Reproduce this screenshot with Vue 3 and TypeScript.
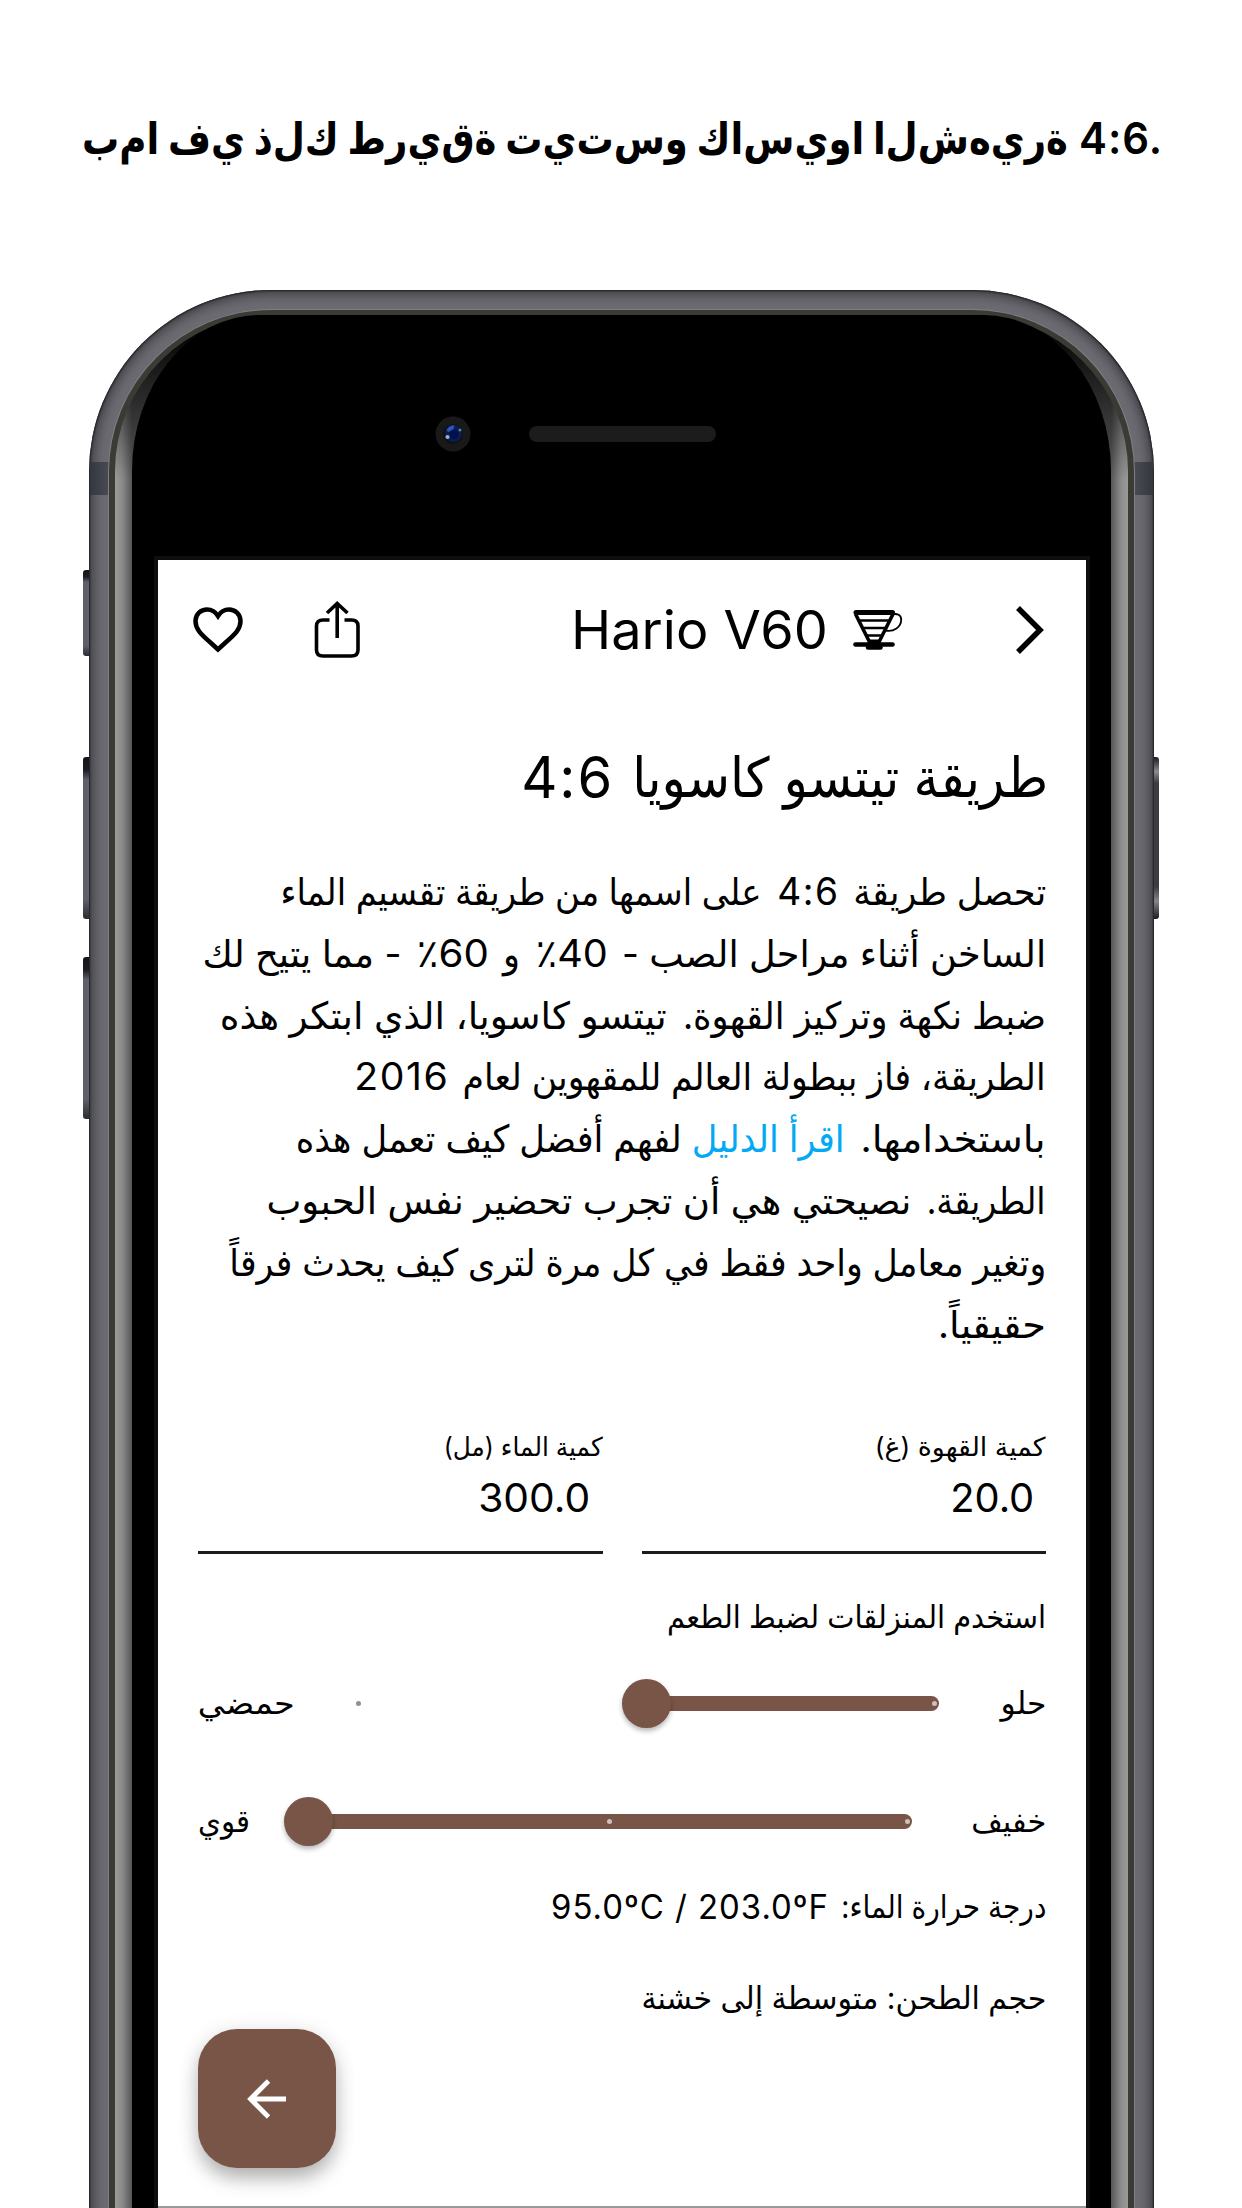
<script setup lang="ts">
interface Segment {
  text: string
  width: number
  kind?: 'num' | 'link' | 'tail'
}

interface SliderRow {
  start: string
  startWidth: number
  end: string
  endWidth: number
  fill: number
  dots: number[]
  offDots: number[]
  cls: string
}

const headline: string = 'بما في ذلك طريقة تيتسو كاسيوا الشهيرة'
  .split(' ')
  .map((word) => word.split('').join('\u200c'))
  .join(' ')

const title: Segment[] = [
  { text: 'طريقة تيتسو كاسويا', width: 416 },
  { text: '4:6', width: 93, kind: 'num' },
]

// The Arabic letter mark keeps the percent sign on the left of its number.
const copy: Segment[][] = [
  [
    { text: 'تحصل طريقة', width: 193 },
    { text: '4:6', width: 62, kind: 'num' },
    { text: 'على اسمها من طريقة تقسيم الماء', width: 481 },
  ],
  [
    { text: 'الساخن أثناء مراحل الصب -', width: 424 },
    { text: '\u061c40٪', width: 72, kind: 'num' },
    { text: 'و', width: 17 },
    { text: '\u061c60٪', width: 72, kind: 'num' },
    { text: '- مما يتيح لك', width: 199 },
  ],
  [
    { text: 'ضبط نكهة وتركيز القهوة.', width: 363 },
    { text: 'تيتسو كاسويا، الذي ابتكر هذه', width: 447 },
  ],
  [
    { text: 'الطريقة، فاز ببطولة العالم للمقهوين لعام', width: 583 },
    { text: '2016', width: 95, kind: 'num' },
  ],
  [
    { text: 'باستخدامها.', width: 185 },
    { text: 'اقرأ الدليل', width: 153, kind: 'link' },
    { text: 'لفهم أفضل كيف تعمل هذه', width: 386, kind: 'tail' },
  ],
  [
    { text: 'الطريقة.', width: 119 },
    { text: 'نصيحتي هي أن تجرب تحضير نفس الحبوب', width: 645 },
  ],
  [{ text: 'وتغير معامل واحد فقط في كل مرة لترى كيف يحدث فرقاً', width: 817 }],
  [{ text: 'حقيقياً.', width: 108 }],
]

const sliders: SliderRow[] = [
  { start: 'حلو', startWidth: 46, end: 'حمضي', endWidth: 97, fill: 50, dots: [0], offDots: [100], cls: 'taste' },
  { start: 'خفيف', startWidth: 75, end: 'قوي', endWidth: 52, fill: 100, dots: [0, 49.7], offDots: [], cls: 'strength' },
]

const fields = [
  { label: 'كمية القهوة (غ)', labelWidth: 171, value: '20.0', valueWidth: 84 },
  { label: 'كمية الماء (مل)', labelWidth: 159, value: '300.0', valueWidth: 112 },
]

// Condenses or widens a single line of text to the given width.
const vFit = {
  mounted(el: HTMLElement, binding: { value: number }) {
    const natural = el.getBoundingClientRect().width
    const rtl = getComputedStyle(el).direction === 'rtl'
    el.style.transformOrigin = rtl ? 'right center' : 'left center'
    el.style.transform = `scaleX(${binding.value / natural})`
    el.style[rtl ? 'marginLeft' : 'marginRight'] = `${binding.value - natural}px`
  },
}
</script>

<template>
  <main class="page">
    <h1 class="headline">
      <bdo dir="ltr" class="fit" v-fit="986">{{ headline }}</bdo>
      <span class="fit ratio" v-fit="84">4:6.</span>
    </h1>
    <div class="device">
      <i class="key mute"></i><i class="key up"></i><i class="key down"></i><i class="key power"></i>
      <div class="shell">
        <i class="antenna left"></i><i class="antenna right"></i>
        <div class="rim">
          <div class="bevel">
            <div class="face">
              <div class="sensors">
                <svg class="camera" width="36" height="36" viewBox="0 0 36 36">
                  <circle cx="18" cy="18" r="17.5" fill="#191919" />
                  <circle cx="18" cy="18" r="10" fill="#111114" />
                  <circle cx="18.500" cy="17.500" r="8.500" fill="#0b1c52" />
                  <path d="M11.500 14.500a8 8 0 0 1 8-5l-1 3.500-5 3z" fill="#2f55b8" />
                  <circle cx="19" cy="18.500" r="4.500" fill="#03104a" />
                  <circle cx="12.500" cy="21" r="2.100" fill="#8fb4d8" />
                  <circle cx="25" cy="14" r="1.500" fill="#4b88a8" />
                </svg>
                <span class="speaker"></span>
              </div>
              <section class="screen" dir="rtl">
                <header class="bar">
                  <svg class="chev" width="32" height="52" viewBox="0 0 32 52" fill="none" stroke="#000" stroke-width="5.500">
                    <path d="M4 4 26 26 4 48" />
                  </svg>
                  <div class="brand">
                    <svg width="50" height="42" viewBox="0 0 50 42" fill="none" stroke="#000">
                      <path d="M3 3.500H39.500" stroke-width="5" stroke-linecap="round" />
                      <path d="M2.500 5 17 34M40 5 25.500 34" stroke-width="3.600" />
                      <path d="M7 11.500H36M10.500 19H32.500M14 26.500H29" stroke-width="2.300" />
                      <path d="M39 5.500C44 4 48.500 6 48.200 11 48 18 41 23 32.500 21.500" stroke-width="1.800" />
                      <path d="M2.500 35.500H39.500" stroke-width="4.600" stroke-linecap="round" />
                      <path d="M15 38.500H27.500" stroke-width="4.500" stroke-linecap="round" />
                      <path d="M17 31H25.500L24 36H18.500Z" fill="#000" />
                    </svg>
                    <span dir="ltr" class="fit" v-fit="257">Hario V60</span>
                  </div>
                  <svg class="share" width="46" height="58" viewBox="0 0 46 58" fill="none" stroke="#000" stroke-width="3.600">
                    <path d="M15.500 19H9Q2.500 19 2.500 25V49Q2.500 55 9 55H37.500Q44 55 44 49V25Q44 19 37.500 19H30.500" />
                    <path d="M23.200 37V3M13 12 23.200 2.500 33.500 12" />
                  </svg>
                  <svg class="heart" width="50" height="46" viewBox="0 0 50 46" fill="none" stroke="#000" stroke-width="4.500">
                    <path d="M25 42.500 18 36C7.500 27 2.500 22 2.500 14 2.500 7 8 2.500 14 2.500 18.500 2.500 22.500 5 25 9 27.500 5 31.500 2.500 36 2.500 42 2.500 47.500 7 47.500 14 47.500 22 42.500 27 32 36Z" />
                  </svg>
                </header>

                <h2 class="title">
                  <span v-for="s in title" :key="s.text" class="fit" :class="s.kind" v-fit="s.width">{{ s.text }}</span>
                </h2>

                <div class="copy">
                  <p v-for="(line, i) in copy" :key="i">
                    <span v-for="s in line" :key="s.text" class="fit" :class="s.kind" v-fit="s.width">{{ s.text }}</span>
                  </p>
                </div>

                <div class="fields">
                  <div v-for="f in fields" :key="f.label" class="field">
                    <div class="label"><span class="fit" v-fit="f.labelWidth">{{ f.label }}</span></div>
                    <div class="value"><span class="fit" v-fit="f.valueWidth">{{ f.value }}</span></div>
                  </div>
                </div>

                <p class="hint"><span class="fit" v-fit="379">استخدم المنزلقات لضبط الطعم</span></p>

                <div v-for="s in sliders" :key="s.cls" class="slider" :class="s.cls">
                  <span class="fit" v-fit="s.startWidth">{{ s.start }}</span>
                  <div class="track">
                    <span class="fill" :style="{ width: s.fill + '%' }"></span>
                    <span class="stops">
                      <i v-for="d in s.dots" :key="d" class="dot" :style="{ right: d + '%' }"></i>
                      <i v-for="d in s.offDots" :key="d" class="dot off" :style="{ right: d + '%' }"></i>
                      <i class="thumb" :style="{ right: s.fill + '%' }"></i>
                    </span>
                  </div>
                  <span class="fit" v-fit="s.endWidth">{{ s.end }}</span>
                </div>

                <p class="info temp">
                  <span class="fit" v-fit="205">درجة حرارة الماء:</span>
                  <span dir="ltr" class="fit degrees" v-fit="278">95.0ºC / 203.0ºF</span>
                </p>
                <p class="info"><span class="fit" v-fit="405">حجم الطحن: متوسطة إلى خشنة</span></p>

                <button class="next" type="button">
                  <svg width="42" height="42" viewBox="0 0 42 42" fill="none" stroke="#fff" stroke-width="4.800">
                    <path d="M40 21H5M22.500 3 4.500 21 22.500 39" />
                  </svg>
                </button>
              </section>
            </div>
          </div>
        </div>
      </div>
    </div>
  </main>
</template>

<style>
body {
  background: #fff;
}
</style>

<style scoped>
* {
  box-sizing: border-box;
}
.page {
  width: 1242px;
  height: 2208px;
  overflow: hidden;
  background: #fff;
  color: #000;
  font-family: Inter, 'DejaVu Sans', sans-serif;
}
h1,
h2,
p {
  margin: 0;
  font-weight: 400;
}
svg {
  flex: none;
}
.fit {
  display: inline-block;
  flex: none;
  white-space: nowrap;
}
.headline {
  display: flex;
  gap: 11px;
  margin-top: 108px;
  margin-left: 82px;
  height: 60px;
  font-size: 44px;
  line-height: 60px;
  font-weight: 700;
}
.ratio {
  font-weight: 600;
  letter-spacing: 1px;
}
.device {
  position: relative;
  width: 1065px;
  height: 2100px;
  margin: 122px 0 0 89px;
}
.key {
  position: absolute;
  width: 9px;
  left: -6px;
  border-radius: 3px 0 0 3px;
  background: linear-gradient(#14141a, #1d1e24 8%, #5d6069 14%, #5d6069 88%, #2b2c31);
}
.mute {
  top: 280px;
  height: 86px;
}
.up {
  top: 467px;
  height: 162px;
}
.down {
  top: 667px;
  height: 162px;
}
.power {
  top: 467px;
  height: 162px;
  left: auto;
  right: -5px;
  border-radius: 0 3px 3px 0;
  background: linear-gradient(#1a1b1f, #8a8b90 9%, #3b3d43 16%, #3b3d43 80%, #85868b 89%, #1a1b1f);
}
.shell {
  position: relative;
  height: 100%;
  padding: 20px 20px 0;
  border-radius: 182px 182px 0 0;
  background: #6c6b71;
  box-shadow: inset 0 0 2px 1px #1d1e21, inset 0 0 12px 4px #3b3b41;
}
.antenna {
  position: absolute;
  top: 172px;
  width: 20px;
  height: 33px;
  background: linear-gradient(90deg, #34373d, #4a4d53);
}
.antenna.left {
  left: 1px;
}
.antenna.right {
  right: 1px;
  transform: scaleX(-1);
}
.rim {
  position: relative;
  height: 100%;
  padding: 5px 6px 0;
  border-radius: 162px 162px 0 0;
  background: #3a3b35;
  box-shadow: 0 0 0 1px #7f7e84;
}
.bevel {
  height: 100%;
  padding: 0 17px;
  border-radius: 156px 156px 0 0;
  background:
    linear-gradient(#000 10px, rgba(0, 0, 0, 0.75) 45px, transparent 165px) top / 100% 170px no-repeat,
    linear-gradient(90deg, #9a9a9a 0, #8c8c8c 7px, #565656 17px, #565656 calc(100% - 17px), #8c8c8c calc(100% - 7px), #9a9a9a 100%);
}
.face {
  height: 100%;
  padding: 0 25px 0 26px;
  background: #000;
  border-radius: 128px 128px 0 0 / 156px 156px 0 0;
}
.sensors {
  display: flex;
  align-items: center;
  gap: 58px;
  height: 245px;
  padding: 0 0 8px 277px;
}
.speaker {
  width: 187px;
  height: 16px;
  border-radius: 8px;
  background: #1c1c1c;
}
.screen {
  height: 1648px;
  padding: 0 40px;
  background: #fff;
  border-bottom: 2px solid #999;
  box-shadow: 0 0 0 4px #0e0e0e;
}
.bar {
  display: flex;
  align-items: center;
  height: 139px;
}
.brand {
  display: flex;
  flex: none;
  align-items: center;
  gap: 25px;
  margin-right: 111px;
  font-size: 53px;
  line-height: 80px;
}
.share {
  margin-right: 211px;
}
.heart {
  margin-right: 71px;
}
.title {
  display: flex;
  gap: 18px;
  margin-top: 38px;
  margin-right: -2px;
  height: 80px;
  font-size: 55px;
  line-height: 80px;
}
.title .num {
  font-size: 58px;
  letter-spacing: 2px;
}
.copy {
  margin-top: 44px;
  font-size: 37.5px;
  line-height: 61.8px;
}
.copy p {
  display: flex;
  gap: 16px;
  height: 61.8px;
}
.copy .num {
  margin-right: -2px;
  font-size: 38.5px;
  letter-spacing: 1.5px;
}
.link {
  color: #03a9f4;
}
.tail {
  margin-right: -6px;
}
.fields {
  display: flex;
  gap: 39px;
  margin-top: 74px;
}
.field {
  flex: 1;
  height: 125px;
  border-bottom: 3px solid #1c1c1c;
}
.label {
  height: 36px;
  font-size: 26px;
  line-height: 36px;
}
.value {
  height: 50px;
  margin-top: 8px;
  padding-right: 12px;
  font-size: 39px;
  line-height: 50px;
}
.hint {
  margin-top: 41px;
  height: 44px;
  font-size: 31px;
  line-height: 44px;
}
.slider {
  display: flex;
  align-items: center;
  height: 60px;
  margin-top: 34px;
  font-size: 31px;
  line-height: 44px;
}
.strength {
  margin-top: 58px;
}
.track {
  position: relative;
  flex: 1;
  height: 15px;
  margin: 0 61px 0 58px;
}
.strength .track {
  margin: 0 59px 0 53px;
}
.fill {
  display: block;
  height: 15px;
  border-radius: 0 8px 8px 0;
  background: #795548;
}
.stops {
  position: absolute;
  inset: 0 5px;
}
.dot {
  position: absolute;
  top: 5px;
  width: 5px;
  height: 5px;
  margin-right: -2.5px;
  border-radius: 50%;
  background: #d0bfb8;
}
.dot.off {
  background: #998d89;
}
.thumb {
  position: absolute;
  top: -17px;
  width: 49px;
  height: 49px;
  margin-right: -24.5px;
  border-radius: 50%;
  background: #795548;
  box-shadow: 0 3px 5px rgba(0, 0, 0, 0.28);
}
.info {
  height: 44px;
  margin-top: 47px;
  font-size: 31px;
  line-height: 44px;
}
.temp {
  display: flex;
  gap: 12px;
  margin-top: 34px;
  font-size: 32px;
}
.degrees {
  font-size: 33.5px;
  letter-spacing: 1px;
}
.next {
  display: flex;
  align-items: center;
  justify-content: center;
  width: 138px;
  height: 139px;
  margin: 9px auto 0 0;
  padding: 0;
  border: 0;
  border-radius: 39px;
  background: #795548;
  box-shadow: 0 12px 20px -2px rgba(0, 0, 0, 0.28), 0 2px 22px rgba(0, 0, 0, 0.1);
}
</style>
